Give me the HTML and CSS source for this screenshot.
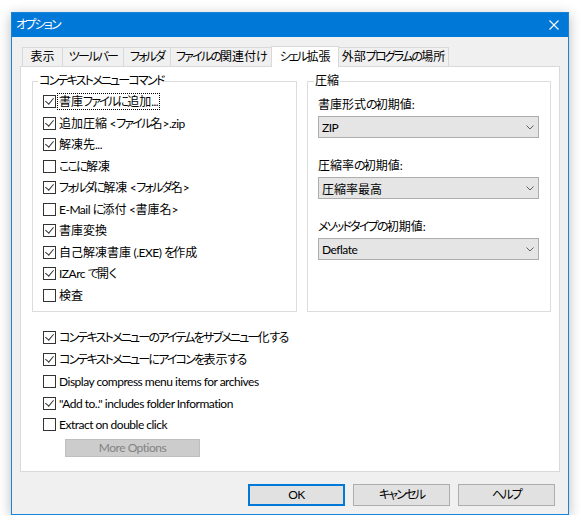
FILE: index.html
```html
<!DOCTYPE html>
<html lang="ja">
<head>
<meta charset="utf-8">
<title>オプション</title>
<link rel="stylesheet" href="styles.css">
</head>
<body>
<div class="window">
  <div class="titlebar">
    <span class="title"><span class="k">オプション</span></span>
    <svg class="close" width="10" height="10" viewBox="0 0 10 10"><path d="M0.5 0.5 L9.5 9.5 M9.5 0.5 L0.5 9.5" stroke="#fff" stroke-width="1.1" fill="none"/></svg>
  </div>
  <div class="body">
    <div class="tabs">
      <div class="tab t1">表示</div>
      <div class="tab t2"><span class="k">ツールバー</span></div>
      <div class="tab t3"><span class="k">フォルダ</span></div>
      <div class="tab t4"><span class="k">ファイルの</span>関連付<span class="k">け</span></div>
      <div class="tab t5 active"><span class="k">シェル</span>拡張</div>
      <div class="tab t6">外部<span class="k">プログラムの</span>場所</div>
    </div>
    <div class="panel">
      <div class="groups">
        <fieldset class="group group-left">
          <legend><span class="k">コンテキストメニューコマンド</span></legend>
          <div class="cb"><span class="box on"></span><span class="label focus">書庫<span class="k">ファイルに</span>追加<span class="en">...</span></span></div>
          <div class="cb"><span class="box on"></span><span class="label">追加圧縮<span class="en"> &lt;</span><span class="k">ファイル</span>名<span class="en">&gt;.zip</span></span></div>
          <div class="cb"><span class="box on"></span><span class="label">解凍先<span class="en">...</span></span></div>
          <div class="cb"><span class="box"></span><span class="label"><span class="k">ここに</span>解凍</span></div>
          <div class="cb"><span class="box on"></span><span class="label"><span class="k">フォルダに</span>解凍<span class="en"> &lt;</span><span class="k">フォルダ</span>名<span class="en">&gt;</span></span></div>
          <div class="cb"><span class="box"></span><span class="label"><span class="en">E-Mail </span><span class="k">に</span>添付<span class="en"> &lt;</span>書庫名<span class="en">&gt;</span></span></div>
          <div class="cb"><span class="box on"></span><span class="label">書庫変換</span></div>
          <div class="cb"><span class="box on"></span><span class="label">自己解凍書庫<span class="en"> (.EXE) </span><span class="k">を</span>作成</span></div>
          <div class="cb"><span class="box on"></span><span class="label"><span class="en">IZArc </span><span class="k">で</span>開<span class="k">く</span></span></div>
          <div class="cb"><span class="box"></span><span class="label">検査</span></div>
        </fieldset>
        <fieldset class="group group-right">
          <legend>圧縮</legend>
          <div class="field">
            <div class="flabel">書庫形式<span class="k">の</span>初期値<span class="en">:</span></div>
            <div class="select"><span class="en">ZIP</span><svg width="8" height="5" viewBox="0 0 8 5"><path d="M0.5 0.5 L4 4 L7.5 0.5" stroke="#606060" fill="none"/></svg></div>
          </div>
          <div class="field">
            <div class="flabel">圧縮率<span class="k">の</span>初期値<span class="en">:</span></div>
            <div class="select"><span>圧縮率最高</span><svg width="8" height="5" viewBox="0 0 8 5"><path d="M0.5 0.5 L4 4 L7.5 0.5" stroke="#606060" fill="none"/></svg></div>
          </div>
          <div class="field">
            <div class="flabel"><span class="k">メソッドタイプの</span>初期値<span class="en">:</span></div>
            <div class="select"><span class="en">Deflate</span><svg width="8" height="5" viewBox="0 0 8 5"><path d="M0.5 0.5 L4 4 L7.5 0.5" stroke="#606060" fill="none"/></svg></div>
          </div>
        </fieldset>
      </div>
      <div class="options">
        <div class="cb"><span class="box on"></span><span class="label"><span class="k">コンテキストメニューのアイテムをサブメニュー</span>化<span class="k">する</span></span></div>
        <div class="cb"><span class="box on"></span><span class="label"><span class="k">コンテキストメニューにアイコンを</span>表示<span class="k">する</span></span></div>
        <div class="cb"><span class="box"></span><span class="label en">Display compress menu items for archives</span></div>
        <div class="cb"><span class="box on"></span><span class="label en">"Add to.." includes folder Information</span></div>
        <div class="cb"><span class="box"></span><span class="label en">Extract on double click</span></div>
        <div class="more en">More Options</div>
      </div>
    </div>
    <div class="buttons">
      <div class="btn default en">OK</div>
      <div class="btn"><span class="k">キャンセル</span></div>
      <div class="btn"><span class="k">ヘルプ</span></div>
    </div>
  </div>
</div>
</body>
</html>
```
FILE: styles.css
```css
* { box-sizing: border-box; }
html, body { margin: 0; padding: 0; background: #ffffff; }
body {
  font-family: "Lato", "Noto Sans CJK JP", sans-serif;
  font-size: 12px;
  color: #000;
  font-feature-settings: "palt" 1;
}
.k { letter-spacing: -1.8px; }
.en { letter-spacing: -0.5px; }
.window {
  margin: 12px 0 0 11px;
  width: 558px;
  height: 503px;
  border: 1px solid #1883d7;
  background: #f0f0f0;
  box-shadow: 0 3px 12px rgba(0,0,0,0.28);
  display: flex;
  flex-direction: column;
}
.titlebar {
  height: 24px;
  background: #0078d7;
  color: #fff;
  display: flex;
  align-items: center;
  justify-content: space-between;
  padding: 0 9px 0 4px;
  flex: none;
}
.title { font-size: 12px; line-height: 14px; }
.close { display: block; }
.body {
  flex: 1;
  display: flex;
  flex-direction: column;
  padding: 9px 8px 8px 8px;
}
.tabs {
  display: flex;
  align-items: flex-end;
  height: 21px;
  padding-left: 2px;
  position: relative;
  z-index: 1;
  flex: none;
}
.tab {
  height: 19px;
  margin-bottom: 1px;
  border: 1px solid #d9d9d9;
  border-bottom: none;
  border-left: none;
  background: #f0f0f0;
  line-height: 17px;
  white-space: nowrap;
  text-align: center;
  flex: none;
}
.t1 { width: 41px; border-left: 1px solid #d9d9d9; }
.t2 { width: 61px; }
.t3 { width: 47px; }
.t4 { width: 101px; }
.t5 { width: 68px; }
.t6 { width: 110px; }
.tab.active {
  height: 21px;
  margin-bottom: 0;
  margin-left: -1px;
  background: #fff;
  border-left: 1px solid #d9d9d9;
  line-height: 19px;
}
.panel {
  margin-top: -1px;
  height: 406px;
  background: #fff;
  border: 1px solid #d9d9d9;
  padding: 7px 8px 0 11px;
  flex: none;
}
.groups {
  display: flex;
  gap: 10px;
}
.group {
  margin: 0;
  min-width: 0;
  height: 238px;
  border: 1px solid #dcdcdc;
}
.group legend {
  padding: 0 1px;
  line-height: 14px;
  font-size: 12px;
}
.group-left {
  width: 265px;
  padding: 3px 0 0 10px;
}
.group-left legend { margin-left: -5px; }
.group-right {
  width: 244px;
  padding: 9px 11px 0 10px;
}
.group-right legend { margin-left: -4px; }
.cb {
  display: flex;
  align-items: center;
  height: 21.5px;
  white-space: nowrap;
}
.box {
  width: 13px;
  height: 13px;
  border: 1px solid #333;
  background: #fff;
  flex: none;
  margin-right: 2px;
  position: relative;
}
.box.on::after {
  content: "";
  position: absolute;
  left: 3px;
  top: 0px;
  width: 4px;
  height: 7px;
  border-right: 1.2px solid #333;
  border-bottom: 1.2px solid #333;
  transform: rotate(40deg);
}
.label { line-height: 15px; padding: 0 1px; }
.label.focus { outline: 1px dotted #000; outline-offset: 0; }
.field { margin-bottom: 20px; }
.flabel { height: 16px; line-height: 16px; margin-bottom: 3px; }
.select {
  height: 22px;
  background: #e5e5e5;
  border: 1px solid #adadad;
  display: flex;
  align-items: center;
  justify-content: space-between;
  padding: 0 4px 0 3px;
}
.select svg { display: block; }
.options {
  padding: 15px 0 0 11px;
}
.options .cb { height: 21.75px; }
.more {
  margin: 3px 0 0 22px;
  width: 135px;
  height: 18px;
  background: #cccccc;
  border: 1px solid #bfbfbf;
  color: #838383;
  text-align: center;
  line-height: 16px;
}
.buttons {
  display: flex;
  justify-content: flex-end;
  gap: 8px;
  margin-top: 12px;
  padding-right: 5px;
}
.btn {
  width: 97px;
  height: 22px;
  background: #e1e1e1;
  border: 1px solid #adadad;
  text-align: center;
  line-height: 20px;
}
.btn.default {
  border: 2px solid #0078d7;
  line-height: 18px;
}
```
